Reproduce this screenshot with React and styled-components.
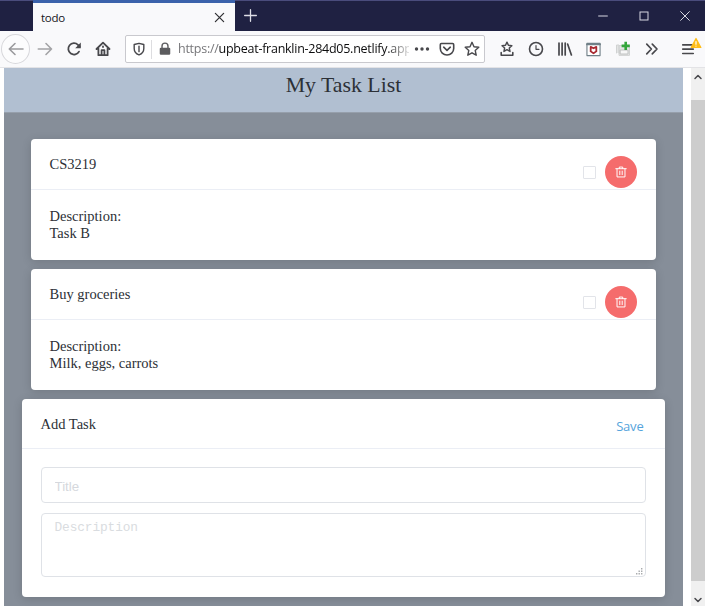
import React from "react";
import styled, { createGlobalStyle } from "styled-components";

const GlobalStyle = createGlobalStyle`
  * { box-sizing: border-box; }
  body { margin: 0; background: #fff; overflow: hidden; }
  button, input, textarea { font: inherit; }
  svg { display: block; flex: none; overflow: visible; }
`;

const Window = styled.div`
  display: flex;
  flex-direction: column;
  width: 705px;
  height: 606px;
  overflow: hidden;
  background: #fff;
`;

const TitleBar = styled.header`
  display: flex;
  flex: none;
  height: 31px;
  padding-left: 33px;
  background: #1f2142;
  box-shadow: inset 0 1px #4a4c7c;
`;

const Tab = styled.div`
  display: flex;
  align-items: center;
  justify-content: space-between;
  width: 202px;
  padding: 0 10px 0 8px;
  border-top: 3px solid #3b62ab;
  background: #f9f9fb;
  color: #15141a;
  font: 11.5px "Open Sans", sans-serif;
  letter-spacing: -0.3px;
`;

const NewTab = styled.div`
  display: flex;
  align-items: center;
  justify-content: center;
  width: 31px;
`;

const WindowControls = styled.div`
  display: flex;
  align-items: center;
  margin-left: auto;
`;

const WindowControl = styled.div`
  display: flex;
  justify-content: center;
  width: 41px;
`;

const Toolbar = styled.div`
  display: flex;
  flex: none;
  align-items: center;
  height: 37px;
  padding-left: 1px;
  border-bottom: 1px solid #e3e3e6;
  background: #f9f9fb;
`;

const ToolButton = styled.div`
  display: flex;
  flex: none;
  align-items: center;
  justify-content: center;
  width: 29px;
  height: 30px;
`;

const BackButton = styled(ToolButton)`
  border: 1px solid #d7d7db;
  border-radius: 50%;
  background: #fcfcfd;
`;

const AddressBar = styled.div`
  display: flex;
  flex: none;
  align-items: center;
  width: 360px;
  height: 28px;
  margin: 0 7px 0 8px;
  border: 1px solid #c9c9ce;
  border-radius: 2px;
  background: #fff;
`;

const AddressIcon = styled.div`
  display: flex;
  justify-content: center;
  width: 25px;
`;

const Divider = styled.div`
  width: 1px;
  height: ${(p) => p.$height}px;
  margin-left: ${(p) => p.$gap || 0}px;
  background: #dddde0;
`;

const Address = styled.div`
  width: 232px;
  padding-left: 1px;
  color: #0c0c0d;
  font: 12.5px/20px "Open Sans", sans-serif;
  letter-spacing: -0.26px;
  white-space: nowrap;
  mask-image: linear-gradient(to right, #000 208px, transparent 236px);
`;

const Scheme = styled.span`
  color: #77777a;
`;

const MenuButton = styled(ToolButton)`
  position: relative;
  width: 36px;
  padding-left: 2px;
`;

const AlertBadge = styled.div`
  position: absolute;
  top: 3px;
  right: 3px;
`;

const Viewport = styled.div`
  display: flex;
  flex: 1;
  min-height: 0;
  padding-left: 4px;
`;

const Page = styled.main`
  display: flex;
  flex-direction: column;
  align-items: center;
  width: 679px;
  overflow: hidden;
  background: #868e99;
  color: #2c3036;
  font: 14.5px/17px "Liberation Serif", serif;
`;

const PageHeader = styled.h1`
  flex: none;
  align-self: stretch;
  height: 45px;
  margin: 0 0 26px;
  border-bottom: 1px solid #969fab;
  background: #b1bfd1;
  color: #2c3036;
  font: 21.8px/35px "Liberation Serif", serif;
  text-align: center;
`;

const Card = styled.section`
  flex: none;
  width: ${(p) => (p.$wide ? 643 : 625)}px;
  height: ${(p) => (p.$wide ? 198 : 121)}px;
  margin-bottom: 9px;
  border-radius: 4px;
  background: #fff;
  box-shadow: 0 2px 10px rgba(0, 0, 0, 0.15);
`;

const CardHeader = styled.div`
  display: flex;
  align-items: center;
  height: ${(p) => (p.$wide ? 50 : 51)}px;
  padding: ${(p) => (p.$wide ? "1px 18.5px 0" : "0 19px 0 18.5px")};
  border-bottom: 1px solid #ebeef5;
`;

const CardTitle = styled.div`
  flex: 1;
`;

const CheckBox = styled.div`
  width: 13px;
  height: 13px;
  margin: 17px 9px 0 0;
  border: 1px solid #e2e4e9;
  border-radius: 1px;
`;

const DeleteButton = styled.button`
  display: flex;
  align-items: center;
  justify-content: center;
  width: 32px;
  height: 32px;
  margin-top: 15px;
  padding: 0;
  border: 0;
  border-radius: 50%;
  background: #f56c6c;
`;

const CardBody = styled.div`
  padding: 18px 18.5px;
`;

const SaveButton = styled.button`
  margin: 3px 3px 0 0;
  padding: 0;
  border: 0;
  background: none;
  color: #55a4dc;
  font: 13px "Open Sans", sans-serif;
  letter-spacing: -0.2px;
`;

const Form = styled.div`
  display: flex;
  flex-direction: column;
  gap: 10px;
  padding: 18px 19px 18px 18.5px;
`;

const TitleInput = styled.input`
  width: 100%;
  height: 36px;
  padding: 2px 13px 0;
  border: 1px solid #dfe2e7;
  border-radius: 4px;
  outline: 0;
  font: 13.3px "Liberation Sans", sans-serif;
  &::placeholder { color: #d5d8dd; opacity: 1; }
`;

const DescriptionField = styled.div`
  display: flex;
  align-items: flex-end;
  height: 64px;
  padding-right: 2px;
  padding-bottom: 1px;
  border: 1px solid #dfe2e7;
  border-radius: 4px;
`;

const DescriptionInput = styled.textarea`
  flex: 1;
  height: 61px;
  padding: 4px 13px;
  border: 0;
  outline: 0;
  resize: none;
  background: none;
  font: 12.8px/20px "Liberation Mono", monospace;
  letter-spacing: -0.1px;
  &::placeholder { color: #d9dce0; opacity: 1; }
`;

const Scrollbar = styled.div`
  display: flex;
  flex-direction: column;
  align-items: center;
  width: 14px;
  margin-left: auto;
  background: #f0f0f0;
`;

const ScrollArrow = styled.div`
  display: flex;
  flex: none;
  align-items: center;
  justify-content: center;
  height: 17px;
`;

const ScrollTrack = styled.div`
  flex: 1;
  width: 100%;
  padding-top: 15px;
`;

const ScrollThumb = styled.div`
  height: 481px;
  background: #cdcdcd;
`;

function Glyph({ size = 16, color = "#48484c", width = 1.6, fill = "none", children }) {
  return (
    <svg width={size} height={size} viewBox="0 0 16 16" fill={fill} stroke={color}
      strokeWidth={width} strokeLinecap="round" strokeLinejoin="round">
      {children}
    </svg>
  );
}

const STAR = "M8 1.3 10 5.7 14.8 6.2 11.2 9.4 12.2 14.2 8 11.8 3.8 14.2 4.8 9.4 1.2 6.2 6 5.7Z";

function TaskCard({ title, description }) {
  return (
    <Card>
      <CardHeader>
        <CardTitle>{title}</CardTitle>
        <CheckBox />
        <DeleteButton aria-label="Delete">
          <Glyph size={12} color="#fff" width={1.3}>
            <path d="M1 3.6H15M5.7 3.4V1.4H10.3V3.4M2.7 3.6V14.6H13.3V3.6M6.4 6.8V11.5M9.6 6.8V11.5" />
          </Glyph>
        </DeleteButton>
      </CardHeader>
      <CardBody>
        <div>Description:</div>
        <div>{description}</div>
      </CardBody>
    </Card>
  );
}

function BrowserToolbar() {
  return (
    <Toolbar>
      <BackButton>
        <Glyph color="#9a9a9d"><path d="M15 8H1.3M7 2.5 1.3 8 7 13.5" /></Glyph>
      </BackButton>
      <ToolButton>
        <Glyph color="#a3a3a6"><path d="M1.3 8H14.5M9 2.5 14.5 8 9 13.5" /></Glyph>
      </ToolButton>
      <ToolButton>
        <Glyph width={1.8}>
          <path d="M13 10.6A5.7 5.7 0 1 1 12 3.8L13.6 5.6" />
          <path d="M14.8 1.6V7.2H9.2Z" fill="#48484c" stroke="none" />
        </Glyph>
      </ToolButton>
      <ToolButton>
        <Glyph width={1.8}>
          <path d="M1.5 8 8 1.6 14.5 8M3.4 7.4V14.2H12.6V7.4" />
          <path d="M6.6 14V9.2H9.4V14" />
          <path d="M8 5.5V6" />
        </Glyph>
      </ToolButton>
      <AddressBar>
        <AddressIcon>
          <Glyph size={14}>
            <path d="M8 1.5 13.5 2.8V7.3C13.5 11 11.2 13.4 8 14.7 4.8 13.4 2.5 11 2.5 7.3V2.8Z" />
            <path d="M8 4.7V11" />
          </Glyph>
        </AddressIcon>
        <Divider $height={19} />
        <AddressIcon>
          <Glyph size={14} color="#5c5c5f">
            <path d="M4.6 7V4.7A3.4 3.4 0 0 1 11.4 4.7V7" />
            <rect x="2.8" y="7.3" width="10.4" height="6.5" rx="0.5" fill="#5c5c5f" />
          </Glyph>
        </AddressIcon>
        <Address><Scheme>https://</Scheme>upbeat-franklin-284d05.netlify.app</Address>
        <AddressIcon>
          <Glyph>
            <g fill="#48484c" stroke="none">
              <circle cx="2.5" cy="8" r="1.7" /><circle cx="8" cy="8" r="1.7" /><circle cx="13.5" cy="8" r="1.7" />
            </g>
          </Glyph>
        </AddressIcon>
        <AddressIcon>
          <Glyph>
            <path d="M2.4 2.5H13.6Q14.7 2.5 14.7 3.7V7.5A6.7 6.5 0 0 1 1.3 7.5V3.7Q1.3 2.5 2.4 2.5ZM4.7 6.2 8 9.3 11.3 6.2" />
          </Glyph>
        </AddressIcon>
        <AddressIcon><Glyph width={1.4}><path d={STAR} /></Glyph></AddressIcon>
      </AddressBar>
      <ToolButton>
        <Glyph>
          <path d={STAR} transform="translate(2.2 .2) scale(.72)" strokeWidth="2" />
          <path d="M2.2 11.5V14.3H13.8V11.5" />
        </Glyph>
      </ToolButton>
      <ToolButton>
        <Glyph><circle cx="8" cy="8" r="6.5" /><path d="M8 4.5V8.3H11" strokeWidth="1.2" /></Glyph>
      </ToolButton>
      <ToolButton>
        <Glyph width={1.7}><path d="M2 2V14M5.1 2V14M8.2 2V14M10.6 3 14.4 14" /></Glyph>
      </ToolButton>
      <ToolButton>
        <Glyph size={15} width={1.2}>
          <rect x="1" y="1.5" width="14" height="13" fill="#fff" stroke="#718088" />
          <path d="M1 2.5H15" stroke="#718088" strokeWidth="2" />
          <path d="M5 5.2 8 6.7 11 5.2V10L8 12 5 10Z" stroke="#a82730" strokeWidth="1.9" />
        </Glyph>
      </ToolButton>
      <ToolButton>
        <Glyph width={1}>
          <path d="M1.5 12V4H4V12M4 14V4.5H14.5V14Z" fill="#e3e4e4" stroke="#d0d2d2" />
          <path d="M5.5 9H13V13H5.5Z" fill="#f7f7f7" stroke="#c0c2c2" />
          <path d="M10.7 .8V9M6.6 4.9H14.8" stroke="#34a63c" strokeWidth="2.6" strokeLinecap="butt" />
        </Glyph>
      </ToolButton>
      <ToolButton>
        <Glyph size={14} width={1.9}><path d="M2 2.5 7.3 8 2 13.5M8.3 2.5 13.7 8 8.3 13.5" /></Glyph>
      </ToolButton>
      <Divider $height={30} $gap={3} />
      <MenuButton>
        <Glyph size={12} width={2.2}><path d="M1 2.5H15M1 8.2H15M1 14H15" /></Glyph>
        <AlertBadge>
          <Glyph size={12}>
            <path d="M8 2 14.5 14H1.5Z" fill="#ffbd18" stroke="#ffbd18" />
            <path d="M8 6V9.5M8 12V12.1" stroke="#fff" />
          </Glyph>
        </AlertBadge>
      </MenuButton>
    </Toolbar>
  );
}

export default function App() {
  return (
    <Window>
      <GlobalStyle />
      <TitleBar>
        <Tab>
          <span>todo</span>
          <Glyph size={11} color="#303034" width={1.8}><path d="M2 2 14 14M14 2 2 14" /></Glyph>
        </Tab>
        <NewTab>
          <Glyph size={13} color="#dedee6"><path d="M8 .8V15.2M.8 8H15.2" /></Glyph>
        </NewTab>
        <WindowControls>
          <WindowControl><Glyph size={10} color="#d8d8e2"><path d="M1 8H15" /></Glyph></WindowControl>
          <WindowControl><Glyph size={10} color="#d8d8e2"><rect x="1.6" y="1.6" width="12.8" height="12.8" strokeLinejoin="miter" /></Glyph></WindowControl>
          <WindowControl><Glyph size={10} color="#d8d8e2"><path d="M1 1 15 15M15 1 1 15" /></Glyph></WindowControl>
        </WindowControls>
      </TitleBar>
      <BrowserToolbar />
      <Viewport>
        <Page>
          <PageHeader>My Task List</PageHeader>
          <TaskCard title="CS3219" description="Task B" />
          <TaskCard title="Buy groceries" description="Milk, eggs, carrots" />
          <Card $wide>
            <CardHeader $wide>
              <CardTitle>Add Task</CardTitle>
              <SaveButton>Save</SaveButton>
            </CardHeader>
            <Form>
              <TitleInput placeholder="Title" />
              <DescriptionField>
                <DescriptionInput placeholder="Description" />
                <svg width="7" height="7" fill="#a9abad">
                  <path d="M5 0h1.4v1.4H5zM2.5 2.5h1.4v1.4H2.5zM5 2.5h1.4v1.4H5zM0 5h1.4v1.4H0zM2.5 5h1.4v1.4H2.5zM5 5h1.4v1.4H5z" />
                </svg>
              </DescriptionField>
            </Form>
          </Card>
        </Page>
        <Scrollbar>
          <ScrollArrow><Glyph size={8} width={3}><path d="M2 11 8 5 14 11" /></Glyph></ScrollArrow>
          <ScrollTrack><ScrollThumb /></ScrollTrack>
          <ScrollArrow><Glyph size={8} width={3}><path d="M2 9 8 15 14 9" /></Glyph></ScrollArrow>
        </Scrollbar>
      </Viewport>
    </Window>
  );
}
